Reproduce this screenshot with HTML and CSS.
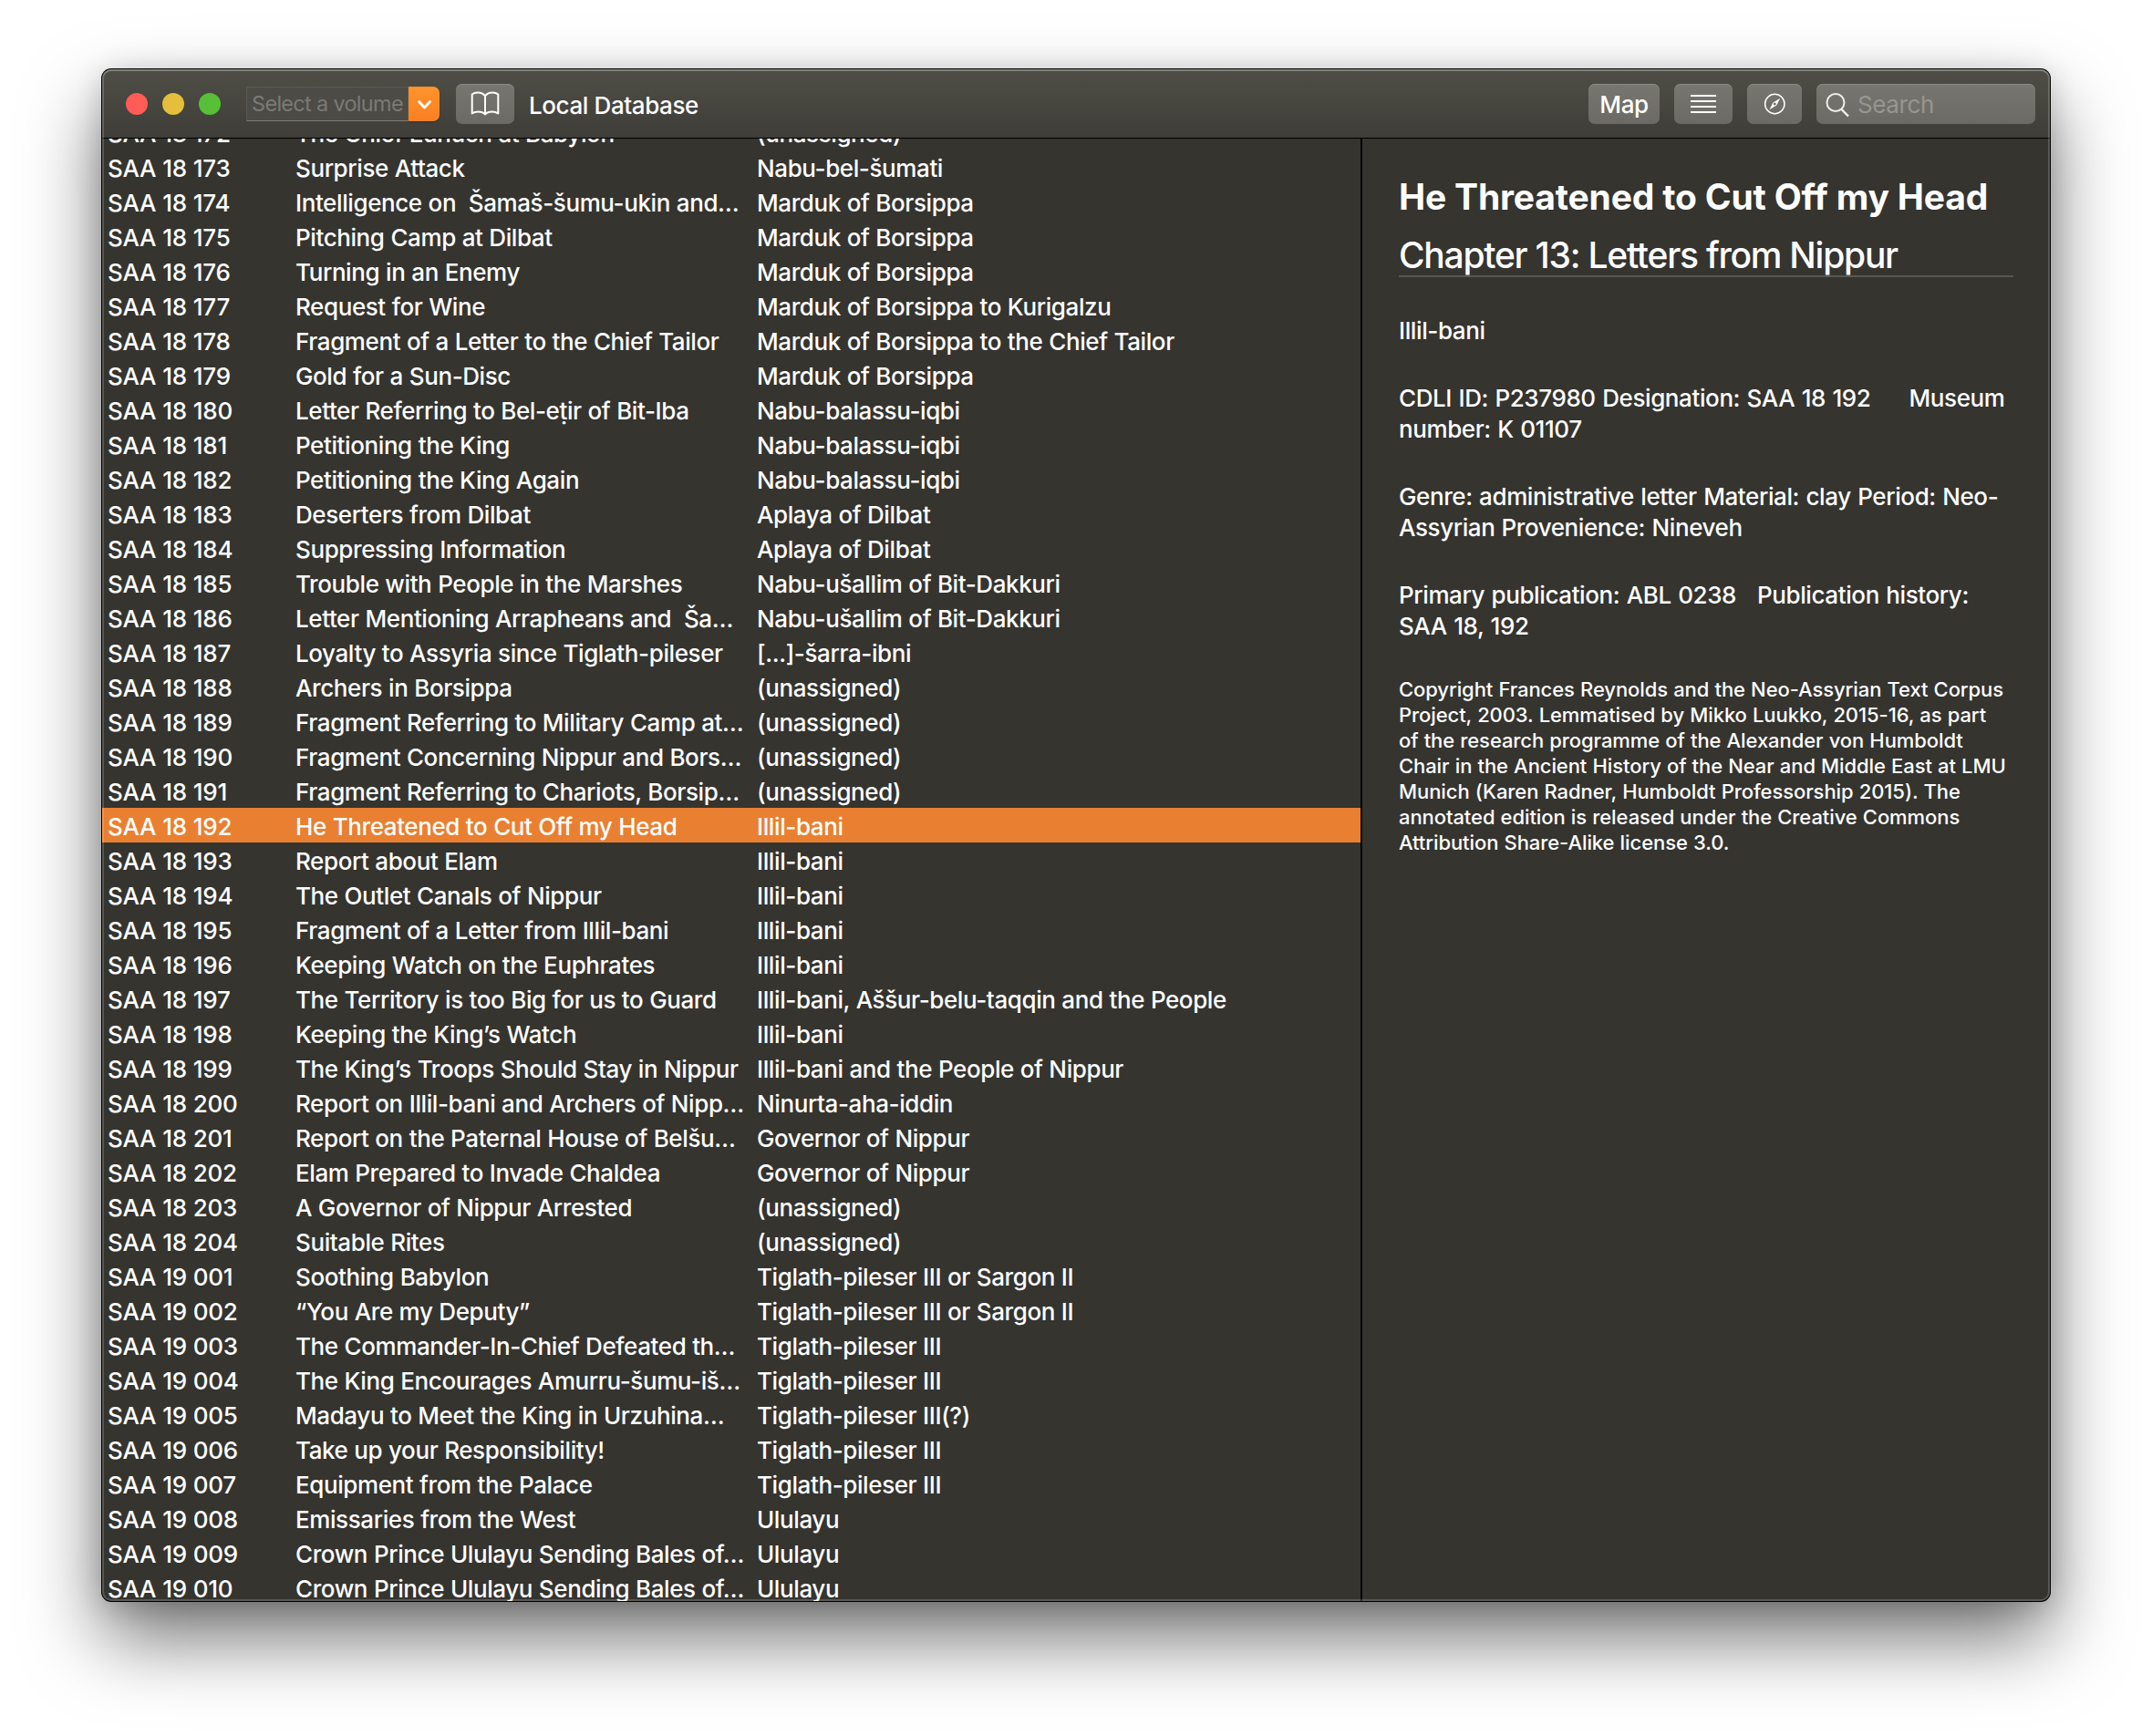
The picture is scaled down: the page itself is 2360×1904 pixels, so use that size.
FILE: index.html
```
<!DOCTYPE html>
<html lang="en">
<head>
<meta charset="utf-8">
<title>Local Database</title>
<link rel="stylesheet" href="styles.css">
</head>
<body>
<main class="window">
  <header class="toolbar">
    <div class="lights"><i class="light red"></i><i class="light yellow"></i><i class="light green"></i></div>
    <div class="combo">
      <span class="combo-field">Select a volume</span>
      <span class="combo-arrow"><svg width="34" height="38" viewBox="0 0 34 38"><path d="M11.5 16.5l6 6.5 6-6.5" fill="none" stroke="#fff" stroke-width="2.8" stroke-linecap="round" stroke-linejoin="round"/></svg></span>
    </div>
    <button class="btn book"><svg width="64" height="44" viewBox="0 0 64 44" fill="none" stroke="#fff" stroke-width="2" stroke-linejoin="round" stroke-linecap="round"><path d="M32 13.2C30 10.6 27 9.4 24 9.4c-2.600 0-4.800.8-6.300 2.100V32.500c2-1.400 4.300-2 6.600-2 3.200 0 6 1 7.700 2.900 1.700-1.900 4.500-2.900 7.700-2.900 2.300 0 4.600.6 6.600 2V11.500c-1.500-1.300-3.700-2.100-6.300-2.100-3 0-6 1.200-8 3.800zV33"/></svg></button>
    <h1 class="title">Local Database</h1>
    <div class="actions">
      <button class="btn map">Map</button>
      <button class="btn list"><svg width="64" height="44" viewBox="0 0 64 44" fill="#fff"><path d="M18 12h28v2H18zM18 18h28v2H18zM18 24h28v2H18zM18 30h28v2H18z"/></svg></button>
      <button class="btn compass"><svg width="60" height="44" viewBox="0 0 60 44"><circle cx="30.300" cy="22" r="10.700" fill="none" stroke="#fff" stroke-width="1.500"/><path fill="#fff" fill-rule="evenodd" d="M36.200 15.800L32.300 23.600 24.500 28.200 28.400 20.400zM30.300 20.600a1.400 1.400 0 1 0 .01 0z"/></svg></button>
      <div class="search"><svg width="40" height="44" viewBox="0 0 40 44" fill="none" stroke="#eeeeec" stroke-width="2"><circle cx="21" cy="20.500" r="9.500"/><path d="M27.500 27.800l7.500 7.700" stroke-width="2.400"/></svg><span>Search</span></div>
    </div>
  </header>
  <div class="content">
    <section class="list-pane">
      <div class="rows">
        <div class="row"><span>SAA 18 172</span><span>The Chief Eunuch at Babylon</span><span>(unassigned)</span></div>
        <div class="row"><span>SAA 18 173</span><span>Surprise Attack</span><span>Nabu-bel-šumati</span></div>
        <div class="row"><span>SAA 18 174</span><span>Intelligence on&nbsp; Šamaš-šumu-ukin and…</span><span>Marduk of Borsippa</span></div>
        <div class="row"><span>SAA 18 175</span><span>Pitching Camp at Dilbat</span><span>Marduk of Borsippa</span></div>
        <div class="row"><span>SAA 18 176</span><span>Turning in an Enemy</span><span>Marduk of Borsippa</span></div>
        <div class="row"><span>SAA 18 177</span><span>Request for Wine</span><span>Marduk of Borsippa to Kurigalzu</span></div>
        <div class="row"><span>SAA 18 178</span><span>Fragment of a Letter to the Chief Tailor</span><span>Marduk of Borsippa to the Chief Tailor</span></div>
        <div class="row"><span>SAA 18 179</span><span>Gold for a Sun-Disc</span><span>Marduk of Borsippa</span></div>
        <div class="row"><span>SAA 18 180</span><span>Letter Referring to Bel-eṭir of Bit-Iba</span><span>Nabu-balassu-iqbi</span></div>
        <div class="row"><span>SAA 18 181</span><span>Petitioning the King</span><span>Nabu-balassu-iqbi</span></div>
        <div class="row"><span>SAA 18 182</span><span>Petitioning the King Again</span><span>Nabu-balassu-iqbi</span></div>
        <div class="row"><span>SAA 18 183</span><span>Deserters from Dilbat</span><span>Aplaya of Dilbat</span></div>
        <div class="row"><span>SAA 18 184</span><span>Suppressing Information</span><span>Aplaya of Dilbat</span></div>
        <div class="row"><span>SAA 18 185</span><span>Trouble with People in the Marshes</span><span>Nabu-ušallim of Bit-Dakkuri</span></div>
        <div class="row"><span>SAA 18 186</span><span>Letter Mentioning Arrapheans and&nbsp; Ša…</span><span>Nabu-ušallim of Bit-Dakkuri</span></div>
        <div class="row"><span>SAA 18 187</span><span>Loyalty to Assyria since Tiglath-pileser</span><span>[...]-šarra-ibni</span></div>
        <div class="row"><span>SAA 18 188</span><span>Archers in Borsippa</span><span>(unassigned)</span></div>
        <div class="row"><span>SAA 18 189</span><span>Fragment Referring to Military Camp at…</span><span>(unassigned)</span></div>
        <div class="row"><span>SAA 18 190</span><span>Fragment Concerning Nippur and Bors…</span><span>(unassigned)</span></div>
        <div class="row"><span>SAA 18 191</span><span>Fragment Referring to Chariots, Borsip…</span><span>(unassigned)</span></div>
        <div class="row selected"><span>SAA 18 192</span><span>He Threatened to Cut Off my Head</span><span>Illil-bani</span></div>
        <div class="row"><span>SAA 18 193</span><span>Report about Elam</span><span>Illil-bani</span></div>
        <div class="row"><span>SAA 18 194</span><span>The Outlet Canals of Nippur</span><span>Illil-bani</span></div>
        <div class="row"><span>SAA 18 195</span><span>Fragment of a Letter from Illil-bani</span><span>Illil-bani</span></div>
        <div class="row"><span>SAA 18 196</span><span>Keeping Watch on the Euphrates</span><span>Illil-bani</span></div>
        <div class="row"><span>SAA 18 197</span><span>The Territory is too Big for us to Guard</span><span>Illil-bani, Aššur-belu-taqqin and the People</span></div>
        <div class="row"><span>SAA 18 198</span><span>Keeping the King’s Watch</span><span>Illil-bani</span></div>
        <div class="row"><span>SAA 18 199</span><span>The King’s Troops Should Stay in Nippur</span><span>Illil-bani and the People of Nippur</span></div>
        <div class="row"><span>SAA 18 200</span><span>Report on Illil-bani and Archers of Nipp…</span><span>Ninurta-aha-iddin</span></div>
        <div class="row"><span>SAA 18 201</span><span>Report on the Paternal House of Belšu…</span><span>Governor of Nippur</span></div>
        <div class="row"><span>SAA 18 202</span><span>Elam Prepared to Invade Chaldea</span><span>Governor of Nippur</span></div>
        <div class="row"><span>SAA 18 203</span><span>A Governor of Nippur Arrested</span><span>(unassigned)</span></div>
        <div class="row"><span>SAA 18 204</span><span>Suitable Rites</span><span>(unassigned)</span></div>
        <div class="row"><span>SAA 19 001</span><span>Soothing Babylon</span><span>Tiglath-pileser III or Sargon II</span></div>
        <div class="row"><span>SAA 19 002</span><span>“You Are my Deputy”</span><span>Tiglath-pileser III or Sargon II</span></div>
        <div class="row"><span>SAA 19 003</span><span>The Commander-In-Chief Defeated th…</span><span>Tiglath-pileser III</span></div>
        <div class="row"><span>SAA 19 004</span><span>The King Encourages Amurru-šumu-iš…</span><span>Tiglath-pileser III</span></div>
        <div class="row"><span>SAA 19 005</span><span>Madayu to Meet the King in Urzuhina…</span><span>Tiglath-pileser III(?)</span></div>
        <div class="row"><span>SAA 19 006</span><span>Take up your Responsibility!</span><span>Tiglath-pileser III</span></div>
        <div class="row"><span>SAA 19 007</span><span>Equipment from the Palace</span><span>Tiglath-pileser III</span></div>
        <div class="row"><span>SAA 19 008</span><span>Emissaries from the West</span><span>Ululayu</span></div>
        <div class="row"><span>SAA 19 009</span><span>Crown Prince Ululayu Sending Bales of…</span><span>Ululayu</span></div>
        <div class="row"><span>SAA 19 010</span><span>Crown Prince Ululayu Sending Bales of…</span><span>Ululayu</span></div>
      </div>
    </section>
    <aside class="detail">
      <h2>He Threatened to Cut Off my Head</h2>
      <h3>Chapter 13: Letters from Nippur</h3>
      <p>Illil-bani</p>
      <p>CDLI ID: P237980 Designation: SAA 18 192<span class="tab wide"></span>Museum<br>number: K 01107</p>
      <p>Genre: administrative letter Material: clay Period: Neo-<br>Assyrian<span class="tab narrow"></span>Provenience: Nineveh</p>
      <p>Primary publication: ABL 0238<span class="tab"></span>Publication history:<br>SAA 18, 192</p>
      <p class="copyright">Copyright Frances Reynolds and the Neo-Assyrian Text Corpus<br>Project, 2003. Lemmatised by Mikko Luukko, 2015-16, as part<br>of the research programme of the Alexander von Humboldt<br>Chair in the Ancient History of the Near and Middle East at LMU<br>Munich (Karen Radner, Humboldt Professorship 2015). The<br>annotated edition is released under the Creative Commons<br>Attribution Share-Alike license 3.0.</p>
    </aside>
  </div>
</main>
</body>
</html>
```
FILE: styles.css
```
* { box-sizing: border-box; }

body {
  margin: 0;
  padding: 76px 112px 0;
  height: 1904px;
  overflow: hidden;
  background: #fff;
  color: #fff;
  font: 500 26px/38px Inter, "Liberation Sans", sans-serif;
  letter-spacing: -0.4px;
}

h1, h2, h3, p { margin: 0; }
svg { display: block; }

.window {
  position: relative;
  display: flex;
  flex-direction: column;
  width: 2136px;
  height: 1680px;
  border-radius: 10px;
  background: #35342f;
  box-shadow: 0 0 0 1px #000, 0 4px 30px rgba(0, 0, 0, 0.16), 0 40px 84px rgba(0, 0, 0, 0.56);
}

/* light rim drawn over the window content */
.window::after {
  content: "";
  position: absolute;
  inset: 0;
  border-radius: 10px;
  box-shadow: inset 0 0 0 2px rgba(255, 255, 255, 0.18), inset 0 2px 0 rgba(255, 255, 255, 0.14);
  pointer-events: none;
}

.toolbar {
  display: flex;
  align-items: center;
  height: 76px;
  padding: 0 16px 0 26px;
  border-bottom: 1px solid #000;
  border-radius: 10px 10px 0 0;
  background: linear-gradient(#4f4e46, #3e3d38);
}

.lights { display: flex; gap: 16px; }
.light { width: 24px; height: 24px; border-radius: 50%; }
.red { background: #ff5b57; }
.yellow { background: #e5bf3c; }
.green { background: #57c038; }

.combo { display: flex; width: 212px; height: 38px; margin-left: 28px; }
.combo-field {
  width: 178px;
  padding-left: 5px;
  border: 1px solid #5a5952;
  border-bottom: 1px solid #7d7c77;
  background: #4c4b45;
  color: #7b7a75;
  font-size: 23.500px;
  font-weight: 400;
  line-height: 35px;
  white-space: nowrap;
  letter-spacing: -0.700px;
}
.combo-arrow {
  width: 34px;
  border-radius: 0 7px 7px 0;
  background: linear-gradient(#ff942c, #fb7f22);
  box-shadow: 0 1px 1px rgba(0, 0, 0, 0.3);
}

.btn, .search {
  height: 44px;
  padding: 0;
  border: 0;
  border-radius: 7px;
  background: linear-gradient(#777670, #6b6a64);
  box-shadow: inset 0 1px 0 #8b8a85;
  color: #fff;
  font: inherit;
  letter-spacing: inherit;
}
.book { width: 64px; margin-left: 18px; }
.title { margin-left: 16px; padding-top: 4px; font: inherit; line-height: 44px; }
.actions { display: flex; gap: 16px; margin-left: auto; }
.map { width: 78px; padding-top: 3px; }
.list { width: 64px; }
.compass { width: 60px; }
.search { display: flex; width: 240px; color: #979691; font-weight: 400; line-height: 46px; }
.search span { margin-left: 5px; }

.content { display: flex; flex: 1; min-height: 0; }

.list-pane {
  width: 1382px;
  overflow: hidden;
  border-right: 2px solid #000;
  border-bottom-left-radius: 10px;
}
.rows { margin-top: -26px; }
.row {
  display: grid;
  grid-template-columns: 206px 506px 1fr;
  height: 38px;
  padding-left: 6px;
  line-height: 42px;
  white-space: nowrap;
  word-spacing: 0.300px;
}
.row span:first-child { letter-spacing: -0.250px; word-spacing: 0.300px; }
.selected { background: #e98031; }

.detail { flex: 1; padding: 32px 40px 0; white-space: nowrap; line-height: 34px; word-spacing: 0.900px; }
.detail h2 { font-size: 39px; font-weight: 700; line-height: 64px; letter-spacing: -0.170px; word-spacing: 0; }
.detail h3 {
  height: 56px;
  margin-bottom: 42px;
  border-bottom: 2px solid #595853;
  font-size: 39px;
  font-weight: 450;
  line-height: 64px;
  letter-spacing: -1.250px;
  word-spacing: 0;
}
.detail p { margin-bottom: 40px; }
.detail .copyright { margin-top: -2px; font-size: 22px; line-height: 28px; letter-spacing: -0.080px; word-spacing: 0.400px; }
.tab { display: inline-block; width: 23px; }
.tab.wide { width: 42px; }
.tab.narrow { width: 7px; }
```
